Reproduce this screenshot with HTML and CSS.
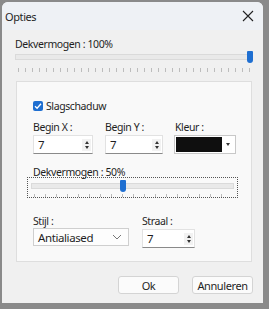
FILE: index.html
```html
<!DOCTYPE html>
<html lang="nl">
<head>
    <meta charset="UTF-8">
    <title>Opties</title>
    <link rel="stylesheet" href="styles.css">
</head>
<body>
    <div class="window">
        <div class="titlebar">
            <span class="title">Opties</span>
            <svg class="close" width="12" height="12" viewBox="0 0 12 12">
                <path d="M1 1 L11 11 M11 1 L1 11" stroke="#222" stroke-width="1.1" fill="none"/>
            </svg>
        </div>

        <div class="content">
            <div class="label top-label">Dekvermogen : 100%</div>
            <div class="slider wide">
                <div class="track"></div>
                <div class="thumb" style="left: 232px"></div>
                <div class="ticks"></div>
            </div>

            <div class="group">
                <label class="check">
                    <span class="box">
                        <svg width="10" height="10" viewBox="0 0 10 10">
                            <path d="M2 5.2 L4.1 7.2 L8 2.8" stroke="#fff" stroke-width="1.3" fill="none"/>
                        </svg>
                    </span>
                    Slagschaduw
                </label>

                <div class="row">
                    <div class="field">
                        <div class="label">Begin X :</div>
                        <div class="spin w60">
                            <span>7</span>
                            <span class="arrows"><i class="up"></i><i class="down"></i></span>
                        </div>
                    </div>
                    <div class="field">
                        <div class="label">Begin Y :</div>
                        <div class="spin w58">
                            <span>7</span>
                            <span class="arrows"><i class="up"></i><i class="down"></i></span>
                        </div>
                    </div>
                    <div class="field">
                        <div class="label">Kleur :</div>
                        <div class="color">
                            <span class="swatch"></span>
                            <span class="drop"><i class="down"></i></span>
                        </div>
                    </div>
                </div>

                <div class="label mid-label">Dekvermogen : 50%</div>
                <div class="focus">
                    <div class="slider">
                        <div class="track"></div>
                        <div class="thumb" style="left: 89px"></div>
                        <div class="ticks sparse"></div>
                    </div>
                </div>

                <div class="row bottom-row">
                    <div class="field">
                        <div class="label">Stijl :</div>
                        <div class="select">
                            <span>Antialiased</span>
                            <svg width="10" height="6" viewBox="0 0 10 6">
                                <path d="M1 1 L5 5 L9 1" stroke="#777" stroke-width="1" fill="none"/>
                            </svg>
                        </div>
                    </div>
                    <div class="field">
                        <div class="label">Straal :</div>
                        <div class="spin w53">
                            <span>7</span>
                            <span class="arrows"><i class="up"></i><i class="down"></i></span>
                        </div>
                    </div>
                </div>
            </div>

            <div class="buttons">
                <button>Ok</button>
                <button>Annuleren</button>
            </div>
        </div>
    </div>
</body>
</html>
```

FILE: styles.css
```css
body {
    margin: 0;
    background-color: #8a8a8a;
    font-family: "Noto Sans", "Open Sans", sans-serif;
    font-size: 10.5px;
    letter-spacing: -0.4px;
    color: #1f1f1f;
}

.window {
    margin: 2px 6px 6px 2px;
    width: 261px;
    height: 301px;
    background-color: #f0f0f0;
    border-radius: 6px 6px 0 0;
    overflow: hidden;
    box-sizing: border-box;
}

.titlebar {
    height: 28px;
    background-color: #eef1f5;
    display: flex;
    align-items: center;
    justify-content: space-between;
    padding: 0 9px 0 3px;
}

.title {
    font-size: 11px;
}

.content {
    padding: 7px 9px 0 13px;
}

.label {
    line-height: 14px;
}

.slider {
    position: relative;
    height: 20px;
}

.slider.wide {
    width: 238px;
    height: 23px;
    margin-top: -1px;
}

.track {
    position: absolute;
    left: 0;
    right: 0;
    top: 4px;
    height: 6px;
    background-color: #e9e9e9;
    border: 1px solid #dadada;
    box-sizing: border-box;
}

.thumb {
    position: absolute;
    top: 1px;
    width: 6px;
    height: 12px;
    background-color: #1f6fd1;
    border-radius: 1px 1px 3px 3px;
}

.ticks {
    position: absolute;
    left: 3px;
    right: 3px;
    top: 15px;
    height: 3px;
    background: repeating-linear-gradient(to right, #bcbcbc 0, #bcbcbc 1px, transparent 1px, transparent 7px);
}

.wide .ticks {
    top: 18px;
    height: 4px;
}

.ticks.sparse {
    background: repeating-linear-gradient(to right, #bcbcbc 0, #bcbcbc 1px, transparent 1px, transparent 11px);
}

.group {
    margin: 8px 0 0 1px;
    width: 236px;
    height: 181px;
    background-color: #f9f9f9;
    border: 1px solid #dedede;
    box-sizing: border-box;
    padding: 18px 0 0 16px;
}

.check {
    display: flex;
    align-items: center;
    gap: 3px;
    line-height: 12px;
}

.box {
    width: 10px;
    height: 10px;
    background-color: #1f6fd1;
    border-radius: 2px;
    display: flex;
}

.row {
    display: flex;
    gap: 12px;
    margin-top: 8px;
}

.label + .spin,
.label + .color {
    margin-top: 1px;
}

.spin {
    height: 19px;
    background-color: #fff;
    border: 1px solid #e2e2e2;
    border-bottom: 1px solid #8a8a8a;
    box-sizing: border-box;
    display: flex;
    align-items: center;
    justify-content: space-between;
    padding: 0 1px 0 4px;
    font-size: 11.5px;
}

.w60 { width: 60px; }
.w58 { width: 58px; }
.w53 { width: 53px; }

.arrows {
    display: flex;
    flex-direction: column;
    gap: 2px;
    width: 9px;
    align-items: center;
    background-color: #f2f2f2;
    padding: 2px 0;
}

.up,
.down {
    width: 0;
    height: 0;
    border-left: 2.5px solid transparent;
    border-right: 2.5px solid transparent;
}

.up {
    border-bottom: 3px solid #333;
}

.down {
    border-top: 3px solid #333;
}

.color {
    margin-left: -1px;
    width: 62px;
    height: 19px;
    background-color: #fff;
    border: 1px solid #c8c8c8;
    box-sizing: border-box;
    display: flex;
    align-items: center;
    padding: 1px;
}

.swatch {
    width: 46px;
    height: 15px;
    background-color: #0f0f0f;
}

.drop {
    flex: 1;
    display: flex;
    justify-content: center;
}

.mid-label {
    margin-top: 11px;
}

.focus {
    margin: -2px 0 0 -6px;
    width: 211px;
    height: 21px;
    border: 1px dotted #555;
    box-sizing: border-box;
    padding: 1px 3px;
}

.bottom-row {
    margin-top: 16px;
    gap: 13px;
}

.select {
    width: 96px;
    height: 18px;
    background-color: #fdfdfd;
    border: 1px solid #cfcfcf;
    box-sizing: border-box;
    display: flex;
    align-items: center;
    justify-content: space-between;
    padding: 0 6px 0 4px;
    font-size: 11.5px;
}

.buttons {
    display: flex;
    justify-content: flex-end;
    gap: 13px;
    margin: 14px 0 0 0;
    padding-right: 1px;
}

button {
    width: 61px;
    height: 18px;
    font-family: inherit;
    font-size: 11px;
    letter-spacing: -0.4px;
    background-color: #fbfbfb;
    border: 1px solid #d4d4d4;
    border-radius: 3px;
    color: #1f1f1f;
    padding: 0;
}
```
